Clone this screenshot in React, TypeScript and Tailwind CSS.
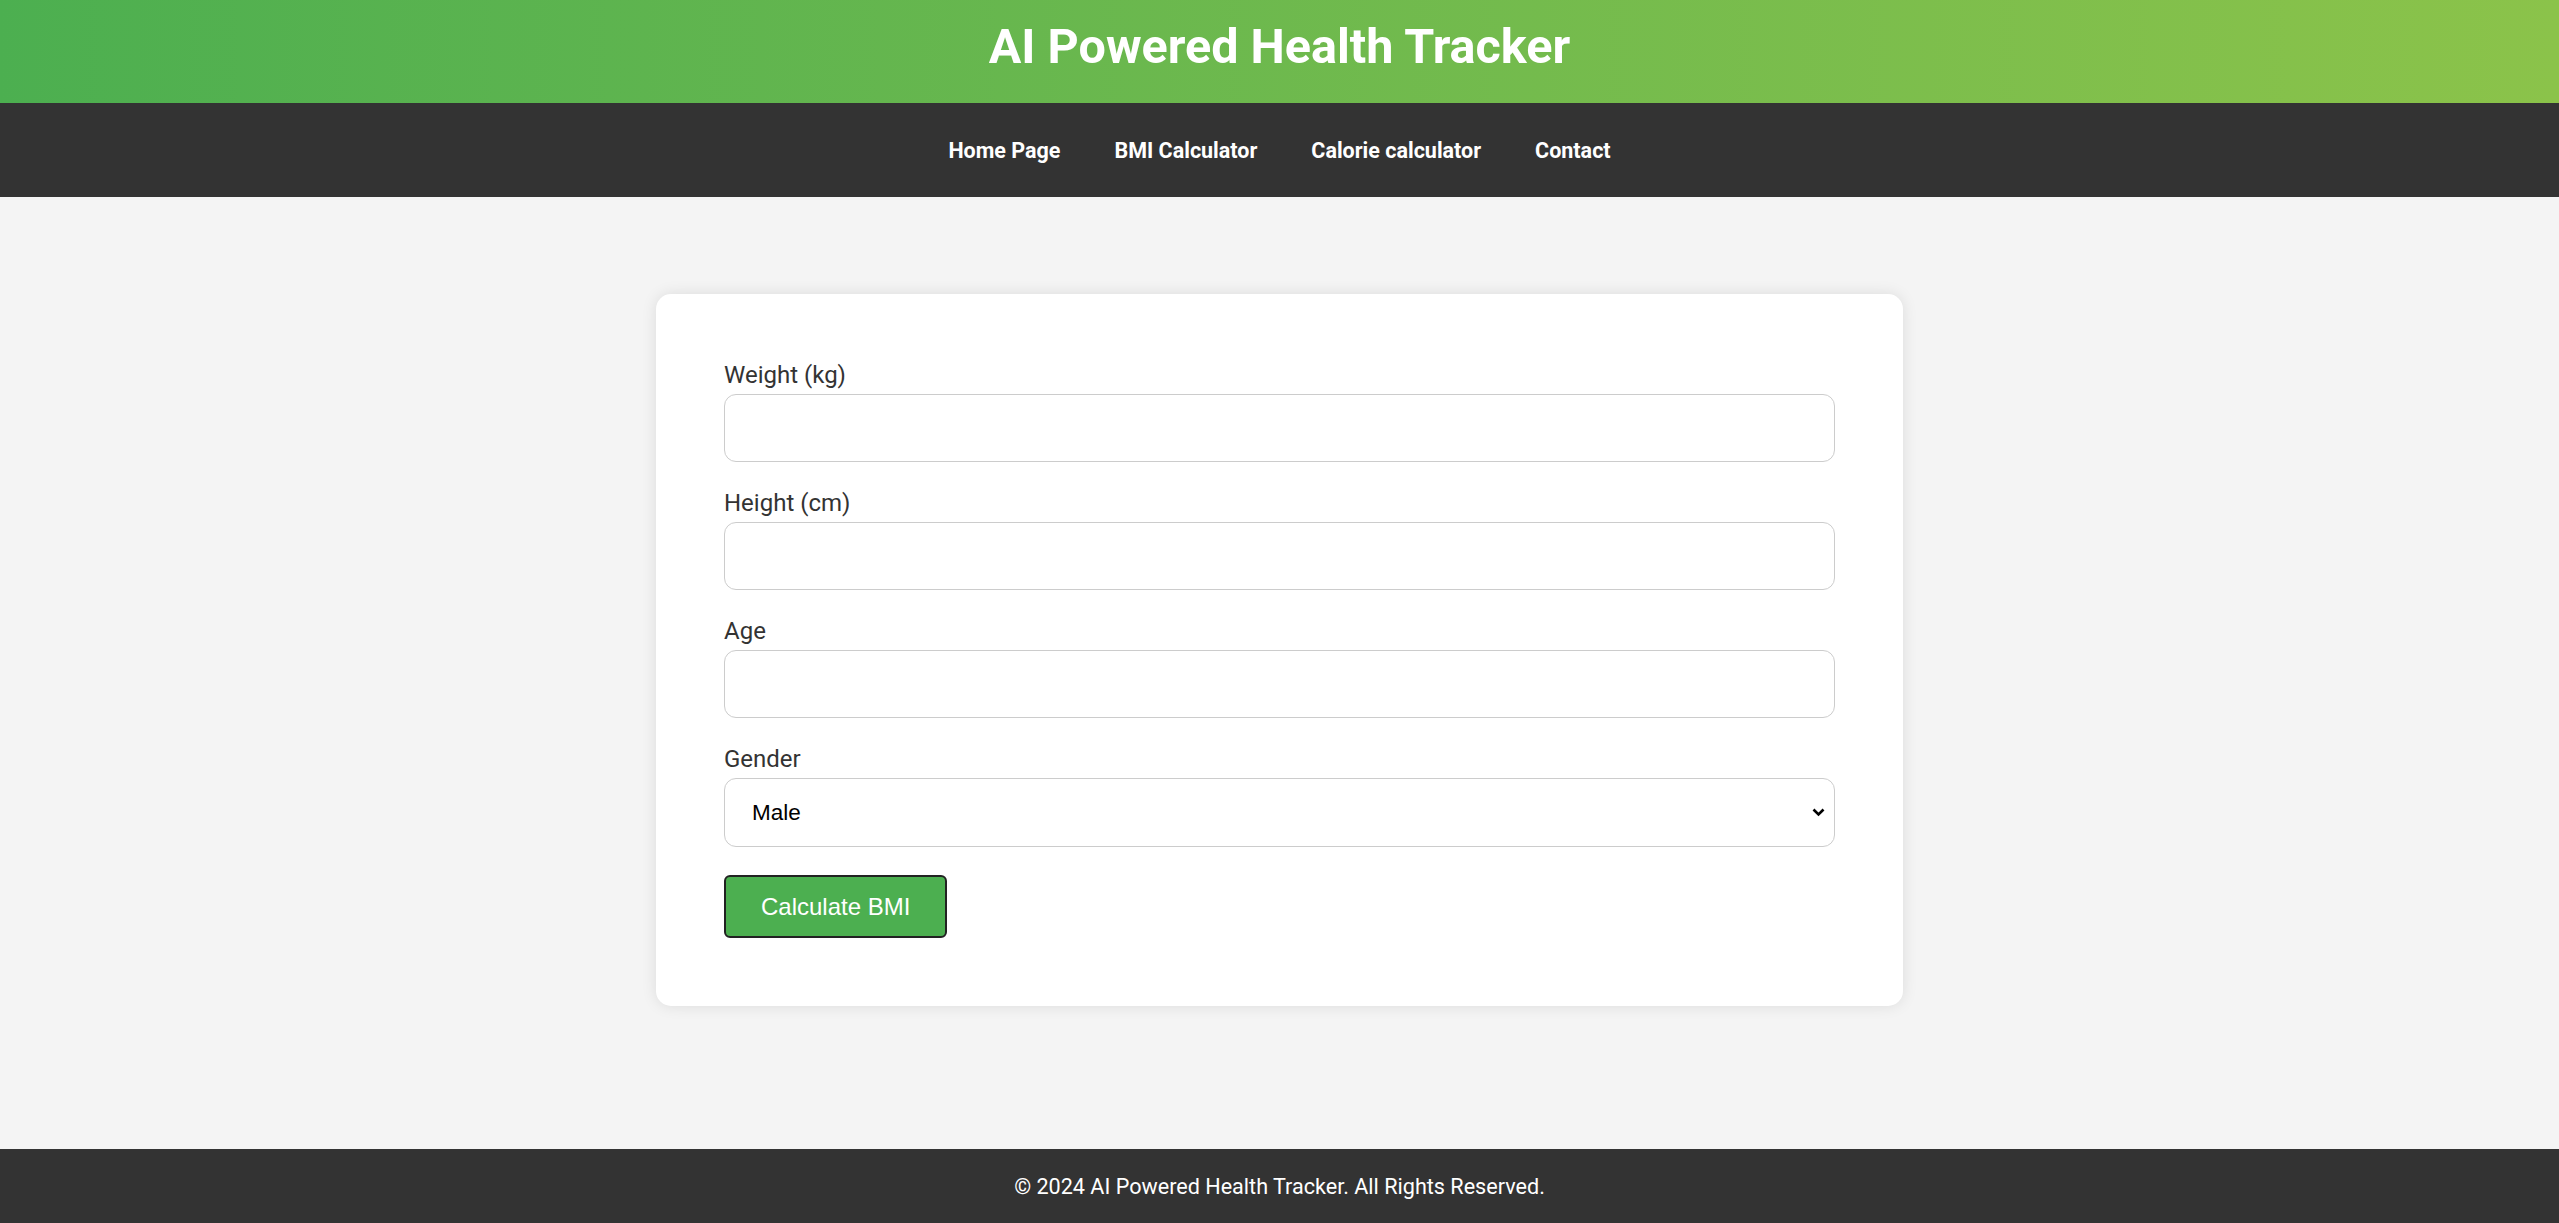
import React from 'react';

const fields = ['Weight (kg)', 'Height (cm)', 'Age'];

const App: React.FC = () => {
  return (
    <div className="min-h-screen flex flex-col bg-[#f4f4f4] font-['Roboto',sans-serif]">
      {/* Header */}
      <header className="h-[103px] bg-linear-to-r from-[#4CAF50] to-[#8BC34A] flex justify-center pt-[19px]">
        <h1 className="text-[48.5px] leading-[56px] font-bold text-white">AI Powered Health Tracker</h1>
      </header>

      {/* Nav */}
      <nav className="h-[94px] bg-[#333333] flex items-center justify-center gap-[54px] pt-[2px]">
        <a className="text-white font-bold text-[21.5px]">Home Page</a>
        <a className="text-white font-bold text-[21.5px]">BMI Calculator</a>
        <a className="text-white font-bold text-[21.5px]">Calorie calculator</a>
        <a className="text-white font-bold text-[21.5px]">Contact</a>
      </nav>

      {/* Form */}
      <main className="flex-1 pt-[97px]">
        <div className="w-[1247px] mx-auto bg-white rounded-[15px] shadow-[0_0_15px_rgba(0,0,0,0.1)] px-[68px] pt-[67px] pb-[68px]">
          {fields.map((f) => (
            <div key={f} className="mb-[27px]">
              <label className="block text-[24px] leading-[28px] text-[#333] mb-[5px]">{f}</label>
              <input type="text" className="block w-full h-[68px] border border-[#cccccc] rounded-[12px] bg-white" />
            </div>
          ))}
          <div className="mb-[28px]">
            <label className="block text-[24px] leading-[28px] text-[#333] mb-[5px]">Gender</label>
            <div className="relative">
              <select className="block w-full h-[69px] appearance-none border border-[#cccccc] rounded-[12px] bg-white pl-[27px] text-[22.5px] text-black font-['Liberation_Sans',Arial,sans-serif]">
                <option>Male</option>
                <option>Female</option>
              </select>
              <svg className="absolute right-[10px] top-[30px] pointer-events-none" width="13" height="9" viewBox="0 0 13 9">
                <path d="M1.5 1.5 L6.5 6.5 L11.5 1.5" fill="none" stroke="#000" strokeWidth="2.6" />
              </svg>
            </div>
          </div>
          <button className="h-[63px] px-[35px] bg-[#4CAF50] text-white text-[24px] border-2 border-[#222] rounded-[6px] font-['Liberation_Sans',Arial,sans-serif]">
            Calculate BMI
          </button>
        </div>
      </main>

      {/* Footer */}
      <footer className="h-[74px] bg-[#333333] flex items-center justify-center pt-[3px]">
        <p className="text-white text-[21.6px]">© 2024 AI Powered Health Tracker. All Rights Reserved.</p>
      </footer>
    </div>
  );
};

export default App;
